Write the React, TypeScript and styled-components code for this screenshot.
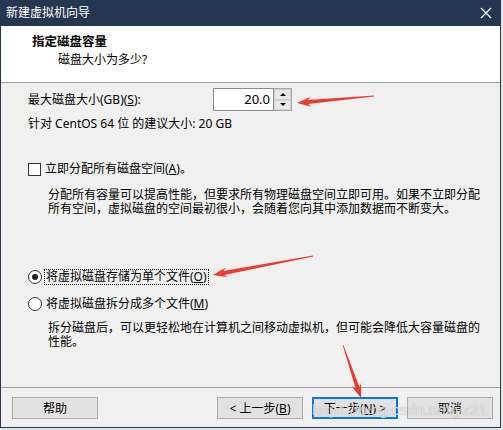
import styled, { createGlobalStyle } from 'styled-components';

const GlobalStyle = createGlobalStyle`
  html, body {
    margin: 0;
    padding: 0;
    background: #e6e6e6;
  }
  * {
    box-sizing: border-box;
  }
`;

const font = `"Noto Sans", "Noto Sans CJK SC", sans-serif`;

const Window = styled.div`
  position: relative;
  width: 501px;
  height: 428px;
  border: 1px solid #26374f;
  border-top: none;
  display: flex;
  flex-direction: column;
  font-family: ${font};
  font-size: 12px;
  color: #000;
  background: #f0f0f0;
`;

const TitleBar = styled.div`
  height: 26px;
  flex: none;
  background: #253750;
  display: flex;
  align-items: center;
  justify-content: space-between;
  padding: 0 8px 0 5px;
  color: #fff;
  font-size: 12px;
  line-height: 26px;
`;

const CloseIcon = () => (
  <svg width="12" height="12" viewBox="0 0 12 12">
    <path d="M1 1 L11 11 M11 1 L1 11" stroke="#fff" strokeWidth="1.2" />
  </svg>
);

const Header = styled.div`
  height: 57px;
  flex: none;
  background: #fff;
  border-bottom: 1px solid #a0a0a0;
  padding: 9px 0 0 31px;
  line-height: 14px;
`;

const HeaderTitle = styled.div`
  font-weight: bold;
  font-size: 12.5px;
`;

const HeaderSub = styled.div`
  margin: 4px 0 0 26px;
`;

const Body = styled.div`
  height: 304px;
  flex: none;
  padding: 5px 0 0 27px;
  line-height: 14px;
  display: flex;
  flex-direction: column;
`;

const SizeRow = styled.div`
  display: flex;
  align-items: center;
  height: 23px;
`;

const SizeLabel = styled.div`
  width: 185px;
`;

const Spin = styled.div`
  display: flex;
  height: 23px;
`;

const SpinInput = styled.div`
  width: 61px;
  height: 23px;
  border: 1px solid #8c8c8c;
  background: #fff;
  text-align: right;
  padding-right: 3px;
  font-size: 13px;
  line-height: 21px;
`;

const SpinButtons = styled.div`
  width: 18px;
  display: flex;
  flex-direction: column;
  border: 1px solid #a8a8a8;
  border-left: none;
`;

const SpinButton = styled.div<{ $down?: boolean }>`
  flex: 1;
  background: #e8e8e8;
  border: 1px solid #d0d0d0;
  display: flex;
  align-items: center;
  justify-content: center;
  &::after {
    content: '';
    border-left: 3px solid transparent;
    border-right: 3px solid transparent;
    ${(p) => (p.$down ? 'border-top: 3px solid #000;' : 'border-bottom: 3px solid #000;')}
  }
`;

const Line = styled.div<{ $top: number }>`
  margin-top: ${(p) => p.$top}px;
`;

const OptionRow = styled.div<{ $top: number }>`
  display: flex;
  align-items: center;
  height: 16px;
  margin-top: ${(p) => p.$top}px;
  gap: 2px;
`;

const CheckBox = styled.div`
  width: 13px;
  height: 13px;
  border: 1px solid #333;
  background: #fff;
`;

const Radio = styled.div<{ $checked?: boolean }>`
  width: 14px;
  height: 14px;
  border-radius: 50%;
  border: 1px solid #333;
  background: #fff;
  display: flex;
  align-items: center;
  justify-content: center;
  &::after {
    content: '';
    width: 6px;
    height: 6px;
    border-radius: 50%;
    background: ${(p) => (p.$checked ? '#222' : 'transparent')};
  }
`;

const OptionLabel = styled.span<{ $focused?: boolean }>`
  padding: 0 1px;
  line-height: 14px;
  border: 1px ${(p) => (p.$focused ? 'dotted #000' : 'solid transparent')};
`;

const Desc = styled.div<{ $top: number }>`
  margin: ${(p) => p.$top}px 0 0 20px;
  width: 436px;
  line-height: 14px;
`;

const Footer = styled.div`
  flex: 1;
  border-top: 1px solid #a0a0a0;
  display: flex;
  align-items: flex-start;
  padding: 9px 7px 0 11px;
  gap: 9px;
`;

const Spacer = styled.div`
  flex: 1;
`;

const Button = styled.div<{ $primary?: boolean }>`
  width: 86px;
  height: 22px;
  background: #e1e1e1;
  border: ${(p) => (p.$primary ? '2px solid #0078d7' : '1px solid #adadad')};
  display: flex;
  align-items: center;
  justify-content: center;
  font-size: 12px;
`;

const Overlay = styled.svg`
  position: absolute;
  left: -1px;
  top: 0;
  width: 503px;
  height: 430px;
  pointer-events: none;
`;

const Watermark = styled.div`
  position: absolute;
  left: 311px;
  top: 401px;
  font-family: "Liberation Sans", Arial, sans-serif;
  font-size: 15px;
  letter-spacing: 0.2px;
  color: rgba(255, 255, 255, 0.7);
  text-shadow: 0 0 1px rgba(80, 80, 80, 0.5);
  white-space: nowrap;
  pointer-events: none;
`;

type Pt = [number, number];

const arrowPoints = (tail: Pt, tip: Pt) => {
  const dx = tip[0] - tail[0];
  const dy = tip[1] - tail[1];
  const len = Math.hypot(dx, dy);
  const ux = dx / len;
  const uy = dy / len;
  const nx = -uy;
  const ny = ux;
  const at = (d: number, w: number): string =>
    `${(tail[0] + ux * d + nx * w).toFixed(1)},${(tail[1] + uy * d + ny * w).toFixed(1)}`;
  const neck = len - 11;
  const barb = len - 14;
  return [
    at(0, 0.4),
    at(neck, 2),
    at(barb, 5),
    at(len, 0),
    at(barb, -5),
    at(neck, -2),
    at(0, -0.4),
  ].join(' ');
};

const arrows: [Pt, Pt][] = [
  [[374, 96], [297, 103]],
  [[313, 256], [213, 275]],
  [[343, 345], [361, 398]],
];

const U = styled.span`
  text-decoration: underline;
  text-underline-offset: 1px;
`;

export default function App() {
  return (
    <>
      <GlobalStyle />
      <Window>
        <TitleBar>
          <span>新建虚拟机向导</span>
          <CloseIcon />
        </TitleBar>
        <Header>
          <HeaderTitle>指定磁盘容量</HeaderTitle>
          <HeaderSub>磁盘大小为多少?</HeaderSub>
        </Header>
        <Body>
          <SizeRow>
            <SizeLabel>
              最大磁盘大小(GB)(<U>S</U>):
            </SizeLabel>
            <Spin>
              <SpinInput>20.0</SpinInput>
              <SpinButtons>
                <SpinButton />
                <SpinButton $down />
              </SpinButtons>
            </Spin>
          </SizeRow>
          <Line $top={6}>针对 CentOS 64 位 的建议大小: 20 GB</Line>
          <OptionRow $top={30}>
            <CheckBox />
            <OptionLabel>
              立即分配所有磁盘空间(<U>A</U>)。
            </OptionLabel>
          </OptionRow>
          <Desc $top={11}>
            分配所有容量可以提高性能，但要求所有物理磁盘空间立即可用。如果不立即分配所有空间，虚拟磁盘的空间最初很小，会随着您向其中添加数据而不断变大。
          </Desc>
          <OptionRow $top={53}>
            <Radio $checked />
            <OptionLabel $focused>
              将虚拟磁盘存储为单个文件(<U>O</U>)
            </OptionLabel>
          </OptionRow>
          <OptionRow $top={11}>
            <Radio />
            <OptionLabel>
              将虚拟磁盘拆分成多个文件(<U>M</U>)
            </OptionLabel>
          </OptionRow>
          <Desc $top={9}>
            拆分磁盘后，可以更轻松地在计算机之间移动虚拟机，但可能会降低大容量磁盘的性能。
          </Desc>
        </Body>
        <Footer>
          <Button>帮助</Button>
          <Spacer />
          <Button>
            &lt; 上一步(<U>B</U>)
          </Button>
          <Button $primary>
            下一步(<U>N</U>) &gt;
          </Button>
          <Button>取消</Button>
        </Footer>
        <Watermark>https://blog.csdn.net/yz21</Watermark>
        <Overlay viewBox="0 0 503 430">
          {arrows.map(([tail, tip], i) => (
            <polygon key={i} points={arrowPoints(tail, tip)} fill="#ee3a30" />
          ))}
        </Overlay>
      </Window>
    </>
  );
}
